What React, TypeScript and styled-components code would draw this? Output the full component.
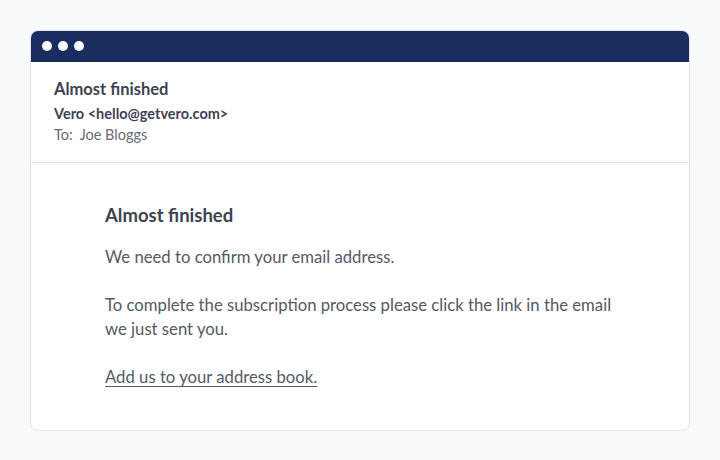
import styled, { createGlobalStyle } from 'styled-components';

const GlobalStyle = createGlobalStyle`
  html, body {
    margin: 0;
    padding: 0;
    background-color: #f9fafb;
    font-family: Lato, "Open Sans", sans-serif;
  }
`;

const Page = styled.div`
  padding: 30px;
`;

const Window = styled.div`
  background-color: white;
  border: 1px solid #e2e4e8;
  border-radius: 8px;
  overflow: hidden;
`;

const TitleBar = styled.div`
  height: 32px;
  margin: -1px -1px 0 -1px;
  background-color: #1b2d5e;
  display: flex;
  align-items: center;
  gap: 6px;
  padding-left: 12px;
`;

const Dot = styled.span`
  width: 10px;
  height: 10px;
  border-radius: 50%;
  background-color: white;
`;

const Header = styled.div`
  padding: 17px 23px 17px;
  border-bottom: 1px solid #e2e4e8;
  color: #3d4350;
`;

const Subject = styled.div`
  font-size: 16.5px;
  font-weight: 700;
  line-height: 20px;
  margin-bottom: 5px;
`;

const From = styled.div`
  font-size: 14.5px;
  font-weight: 700;
  line-height: 20px;
`;

const To = styled.div`
  font-size: 14.5px;
  line-height: 21px;
  color: #676c77;
`;

const Body = styled.div`
  padding: 40px 74px 41px;
  color: #555a65;
`;

const Heading = styled.h2`
  margin: 0 0 18px;
  font-size: 18.5px;
  font-weight: 700;
  line-height: 24px;
  color: #3d4350;
`;

const Para = styled.p`
  margin: 0 0 24px;
  font-size: 16.7px;
  line-height: 24px;
  max-width: 520px;
  &:last-child {
    margin-bottom: 0;
  }
`;

const Link = styled.a`
  color: #555a65;
  text-decoration: underline;
  text-underline-offset: 3px;
`;

export default function App() {
  return (
    <>
      <GlobalStyle />
      <Page>
        <Window>
          <TitleBar>
            <Dot />
            <Dot />
            <Dot />
          </TitleBar>
          <Header>
            <Subject>Almost finished</Subject>
            <From>Vero &lt;hello@getvero.com&gt;</From>
            <To>To:&nbsp; Joe Bloggs</To>
          </Header>
          <Body>
            <Heading>Almost finished</Heading>
            <Para>We need to confirm your email address.</Para>
            <Para>
              To complete the subscription process please click the link in the
              email we just sent you.
            </Para>
            <Para>
              <Link href="#">Add us to your address book.</Link>
            </Para>
          </Body>
        </Window>
      </Page>
    </>
  );
}
